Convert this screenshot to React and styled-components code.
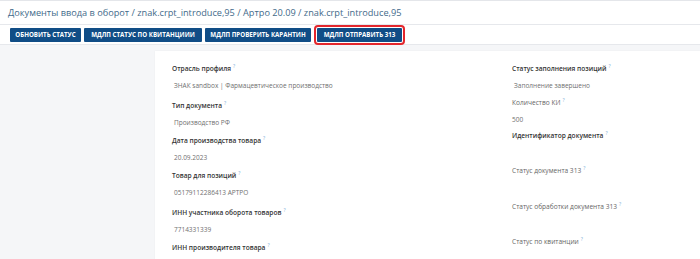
import React from "react";
import styled, { createGlobalStyle } from "styled-components";

const Global = createGlobalStyle`
  html, body { margin: 0; padding: 0; background: #f5f6f8; }
  body { font-family: "Open Sans", "Noto Sans", sans-serif; }
`;

const Page = styled.div`
  width: 700px;
  height: 259px;
  overflow: hidden;
  background: #f5f6f8;
`;

const Header = styled.div`
  background: #fff;
  border-top: 1px solid #e4e6ea;
  border-bottom: 1px solid #e6e8ec;
  height: 23px;
  display: flex;
  align-items: center;
  padding-left: 8px;
`;

const Title = styled.div`
  font-size: 9.2px;
  color: #3f6a8a;
`;

const Toolbar = styled.div`
  background: #fff;
  border-bottom: 1px solid #e6e8ec;
  height: 19px;
  display: flex;
  align-items: center;
  gap: 3px;
  padding-left: 10px;
`;

const Button = styled.button`
  width: ${(p) => p.$w}px;
  height: 14px;
  border: none;
  border-radius: 1px;
  background: #104d86;
  color: #fff;
  font-family: "Open Sans", sans-serif;
  font-weight: 700;
  font-size: 6.2px;
  padding: 0;
  text-align: center;
  white-space: nowrap;
  margin-left: ${(p) => (p.$highlight ? "3px" : "0")};
  outline: ${(p) => (p.$highlight ? "2px solid #e3262c" : "none")};
  outline-offset: 1px;
`;

const Body = styled.div`
  padding: 6px 0 0 155px;
`;

const Card = styled.div`
  background: #fff;
  height: 230px;
  display: grid;
  grid-template-columns: 340px 1fr;
  padding: 8px 0 0 17px;
  box-shadow: 0 0 2px rgba(0, 0, 0, 0.04);
`;

const Column = styled.div`
  display: flex;
  flex-direction: column;
`;

const Field = styled.div`
  display: flex;
  flex-direction: column;
  height: ${(p) => p.$h || 36}px;
  flex-shrink: 0;
`;

const Label = styled.div`
  font-size: 6.6px;
  line-height: 14px;
  font-weight: ${(p) => (p.$plain ? 400 : 600)};
  color: ${(p) => (p.$plain ? "#666" : "#333")};
  white-space: nowrap;
`;

const Hint = styled.sup`
  color: #7fb0d8;
  font-size: 5px;
  margin-left: 2px;
  font-weight: 400;
`;

const Value = styled.div`
  font-size: 6.5px;
  line-height: 14px;
  margin-top: 3px;
  color: #707070;
  padding-left: ${(p) => (p.$indent ? 2 : 0)}px;
  white-space: nowrap;
`;

const left = [
  ["Отрасль профиля", "ЗНАК sandbox | Фармацевтическое производство", 37],
  ["Тип документа", "Производство РФ", 35],
  ["Дата производства товара", "20.09.2023", 35],
  ["Товар для позиций", "05179112286413 АРТРО", 37],
  ["ИНН участника оборота товаров", "7714331339", 35],
  ["ИНН производителя товара", "", 35],
];

const right = [
  ["Статус заполнения позиций", "Заполнение завершено", false, 34],
  ["Количество КИ", "500", true, 33],
  ["Идентификатор документа", "", false, 35],
  ["Статус документа 313", "", true, 36],
  ["Статус обработки документа 313", "", true, 35],
  ["Статус по квитанции", "", true, 35],
];

export default function App() {
  return (
    <Page>
      <Global />
      <Header>
        <Title>Документы ввода в оборот / znak.crpt_introduce,95 / Артро 20.09 / znak.crpt_introduce,95</Title>
      </Header>
      <Toolbar>
        <Button $w={71}>ОБНОВИТЬ СТАТУС</Button>
        <Button $w={118}>МДЛП СТАТУС ПО КВИТАНЦИИИ</Button>
        <Button $w={106}>МДЛП ПРОВЕРИТЬ КАРАНТИН</Button>
        <Button $w={85} $highlight>МДЛП ОТПРАВИТЬ 313</Button>
      </Toolbar>
      <Body>
        <Card>
          <Column>
            {left.map(([l, v, h]) => (
              <Field key={l} $h={h}>
                <Label>
                  {l}
                  <Hint>?</Hint>
                </Label>
                {v && <Value $indent>{v}</Value>}
              </Field>
            ))}
          </Column>
          <Column>
            {right.map(([l, v, plain, h]) => (
              <Field key={l} $h={h}>
                <Label $plain={plain}>
                  {l}
                  <Hint>?</Hint>
                </Label>
                {v && <Value $indent={!plain}>{v}</Value>}
              </Field>
            ))}
          </Column>
        </Card>
      </Body>
    </Page>
  );
}
